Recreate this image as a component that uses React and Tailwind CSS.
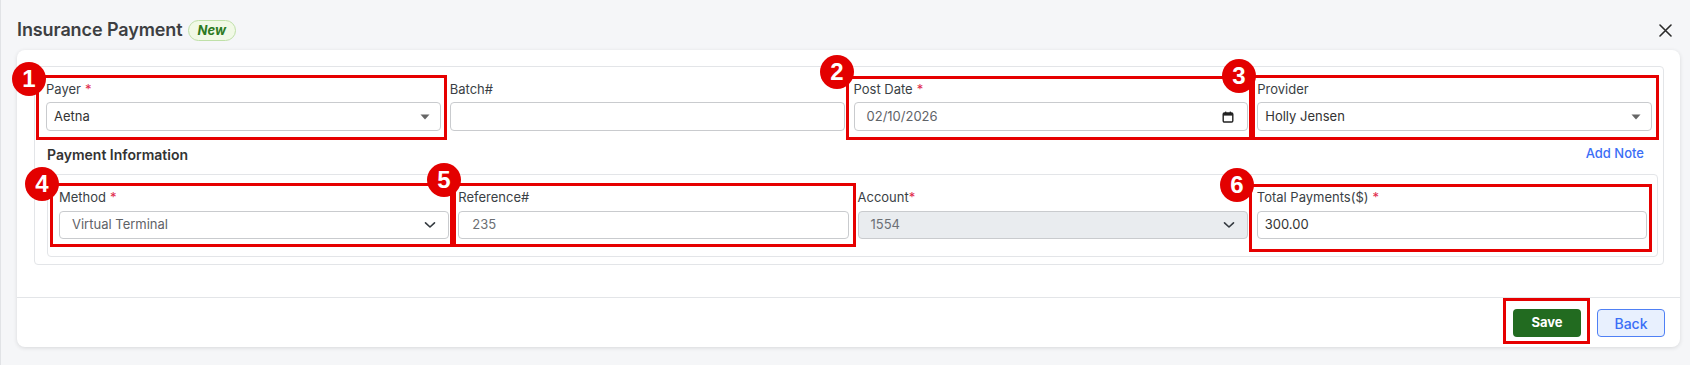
import React from "react";

const Caret = () => (
  <svg width="10" height="6" viewBox="0 0 10 6" className="shrink-0">
    <path d="M0.5 0.5 L9.5 0.5 L5 5.5 Z" fill="#666" />
  </svg>
);

const Chevron = () => (
  <svg width="12" height="8" viewBox="0 0 12 8" className="shrink-0">
    <path d="M1.5 1.8 L6 6 L10.5 1.8" fill="none" stroke="#343a40" strokeWidth="1.6" strokeLinecap="round" strokeLinejoin="round" />
  </svg>
);

const Calendar = () => (
  <svg width="12" height="12" viewBox="0 0 12 12" className="shrink-0">
    <rect x="1.2" y="2" width="9.6" height="9" rx="1.2" fill="none" stroke="#222" strokeWidth="1.4" />
    <rect x="1.2" y="2" width="9.6" height="2.6" fill="#222" />
    <rect x="3" y="0.6" width="1.3" height="2" fill="#222" />
    <rect x="7.7" y="0.6" width="1.3" height="2" fill="#222" />
  </svg>
);

const Label = ({ children, req, tight }) => (
  <div className="h-[20px] flex items-center text-[13px] text-[#3a3f45] leading-none">
    {children}
    {req && <span className={tight ? "text-[#e0284a]" : "ml-[4px] text-[#e0284a]"}>*</span>}
  </div>
);

export default function App() {
  return (
    <div className="relative min-h-[365px] w-full bg-[#f5f6f8] border-l border-[#e1e3e6] font-['Inter',sans-serif] overflow-hidden">
      {/* Header */}
      <div className="h-[50px] pt-[10px] pl-[16px] pr-[18px] flex items-center justify-between">
        <div className="flex items-center gap-[5px]">
          <h1 className="text-[18px] font-semibold text-[#3d3f42] leading-none tracking-[-0.1px]">Insurance Payment</h1>
          <span className="h-[21px] px-[9px] flex items-center rounded-full border border-[#bfe0a8] bg-[#f1f9e6] text-[13px] italic font-bold text-[#2c7a1f] leading-none">New</span>
        </div>
        <svg width="13" height="13" viewBox="0 0 13 13">
          <path d="M1 1 L12 12 M12 1 L1 12" stroke="#2b2b2b" strokeWidth="1.6" strokeLinecap="round" />
        </svg>
      </div>

      {/* Card */}
      <div className="ml-[16px] mr-[10px] bg-white rounded-[8px] shadow-[0_1px_4px_rgba(0,0,0,0.12)]">
        <div className="pt-[16px] pl-[17px] pr-[16px] pb-[32px]">
          <div className="border border-[#e3e5e8] rounded-[4px] pt-[12px] pb-[7px]">
            {/* Row 1 */}
            <div className="px-[11px] grid grid-cols-4 gap-[9px]">
              <div>
                <Label req>Payer</Label>
                <div className="mt-[3px] h-[29px] border border-[#c9cbce] rounded-[4px] pl-[7px] pr-[10px] flex items-center justify-between text-[13px] text-[#333]">
                  <span>Aetna</span>
                  <Caret />
                </div>
              </div>
              <div>
                <Label>Batch#</Label>
                <div className="mt-[3px] h-[29px] border border-[#c9cbce] rounded-[4px]" />
              </div>
              <div>
                <Label req>Post Date</Label>
                <div className="mt-[3px] h-[29px] border border-[#c9cbce] rounded-[4px] pl-[12px] pr-[13px] flex items-center justify-between text-[13px] text-[#5f6368]">
                  <span>02/10/2026</span>
                  <Calendar />
                </div>
              </div>
              <div>
                <Label>Provider</Label>
                <div className="mt-[3px] h-[29px] border border-[#c9cbce] rounded-[4px] pl-[7px] pr-[10px] flex items-center justify-between text-[13px] text-[#333]">
                  <span>Holly Jensen</span>
                  <Caret />
                </div>
              </div>
            </div>

            {/* Payment Information */}
            <div className="pl-[12px] pr-[5px]">
              <div className="mt-[13px] h-[20px] flex items-center justify-between">
                <span className="text-[14px] font-semibold text-[#333]">Payment Information</span>
                <span className="pr-[14px] text-[13px] font-medium text-[#3b6ef6]">Add Note</span>
              </div>
              <div className="mt-[10px] border border-[#e3e5e8] rounded-[4px] pt-[12px] pb-[17px] pl-[11px] pr-[10px] grid grid-cols-4 gap-[9px]">
                <div>
                  <Label req>Method</Label>
                  <div className="mt-[4px] h-[28px] border border-[#c9cbce] rounded-[4px] pl-[12px] pr-[12px] flex items-center justify-between text-[13px] text-[#5f6368]">
                    <span>Virtual Terminal</span>
                    <Chevron />
                  </div>
                </div>
                <div>
                  <Label>Reference#</Label>
                  <div className="mt-[4px] h-[28px] border border-[#c9cbce] rounded-[4px] pl-[13px] flex items-center text-[13px] text-[#6b6f74]">
                    <span>235</span>
                  </div>
                </div>
                <div>
                  <Label req tight>Account</Label>
                  <div className="mt-[4px] h-[28px] border border-[#c9cbce] rounded-[4px] bg-[#e9ecef] pl-[12px] pr-[12px] flex items-center justify-between text-[13px] text-[#6c7076]">
                    <span>1554</span>
                    <Chevron />
                  </div>
                </div>
                <div>
                  <Label req>Total Payments($)</Label>
                  <div className="mt-[4px] h-[28px] border border-[#c9cbce] rounded-[4px] pl-[7px] flex items-center text-[13px] text-[#333]">
                    <span>300.00</span>
                  </div>
                </div>
              </div>
            </div>
          </div>
        </div>

        {/* Footer */}
        <div className="border-t border-[#e3e5e8] pt-[11px] pb-[10px] pr-[15px] flex justify-end gap-[16px]">
          <button className="w-[68px] h-[28px] rounded-[4px] bg-[#226b20] text-white text-[13px] font-bold">Save</button>
          <button className="w-[68px] h-[28px] rounded-[4px] bg-[#e8f0fe] border border-[#4f80f5] text-[#3b6ef6] text-[14px] font-medium">Back</button>
        </div>
      </div>

      {/* Annotation overlay */}
      <div className="pointer-events-none absolute inset-0 font-['Liberation_Sans',Arial,sans-serif]">
        <div className="absolute left-[35px] top-[75px] w-[411px] h-[65px] border-[3px] border-[#e60000]" />
        <div className="absolute left-[845px] top-[76px] w-[406px] h-[64px] border-[3px] border-[#e60000]" />
        <div className="absolute left-[1251px] top-[75px] w-[407px] h-[65px] border-[3px] border-[#e60000]" />
        <div className="absolute left-[49px] top-[183px] w-[403px] h-[64px] border-[3px] border-[#e60000]" />
        <div className="absolute left-[452px] top-[183px] w-[403px] h-[64px] border-[3px] border-[#e60000]" />
        <div className="absolute left-[1248px] top-[184px] w-[403px] h-[68px] border-[3px] border-[#e60000]" />
        <div className="absolute left-[1502px] top-[298px] w-[87px] h-[46px] border-[3px] border-[#e60000]" />

        <div className="absolute left-[11px] top-[62px] w-[34px] h-[34px] rounded-full bg-[#e30000] text-white text-[24px] font-bold flex items-center justify-center leading-none">1</div>
        <div className="absolute left-[819px] top-[55px] w-[34px] h-[34px] rounded-full bg-[#e30000] text-white text-[24px] font-bold flex items-center justify-center leading-none">2</div>
        <div className="absolute left-[1221px] top-[59px] w-[34px] h-[34px] rounded-full bg-[#e30000] text-white text-[24px] font-bold flex items-center justify-center leading-none">3</div>
        <div className="absolute left-[24px] top-[167px] w-[34px] h-[34px] rounded-full bg-[#e30000] text-white text-[24px] font-bold flex items-center justify-center leading-none">4</div>
        <div className="absolute left-[426px] top-[163px] w-[34px] h-[34px] rounded-full bg-[#e30000] text-white text-[24px] font-bold flex items-center justify-center leading-none">5</div>
        <div className="absolute left-[1219px] top-[168px] w-[34px] h-[34px] rounded-full bg-[#e30000] text-white text-[24px] font-bold flex items-center justify-center leading-none">6</div>
      </div>
    </div>
  );
}
